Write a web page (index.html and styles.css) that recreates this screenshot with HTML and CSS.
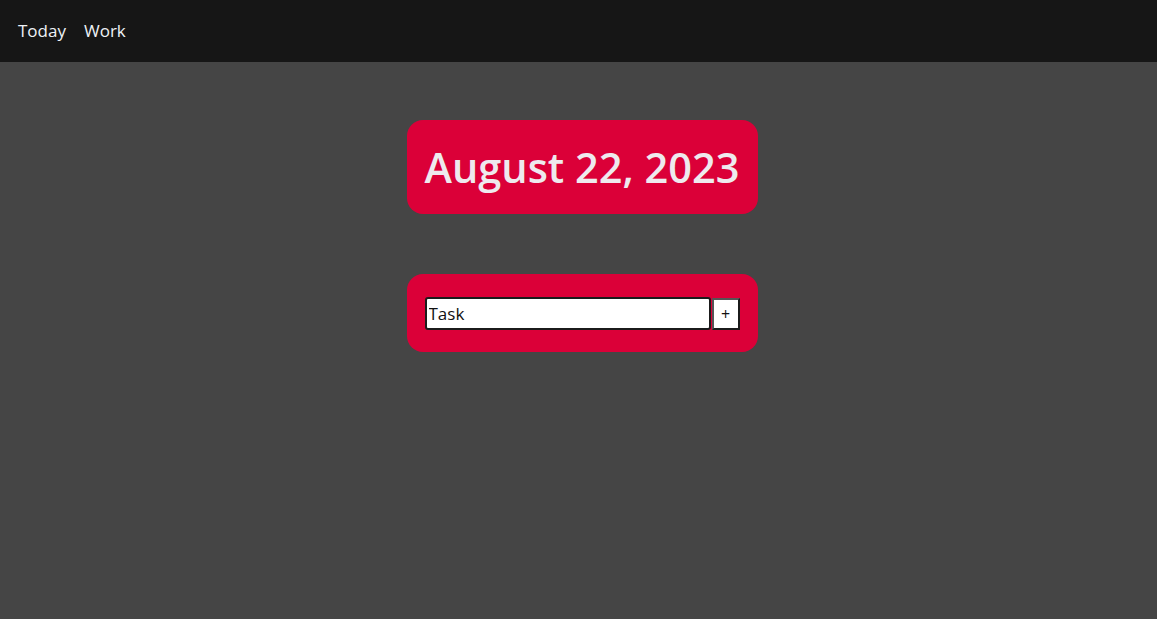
FILE: index.html
```html
<!DOCTYPE html>
<html lang="en">
<head>
<meta charset="utf-8">
<title>Todo</title>
<link rel="stylesheet" href="styles.css">
</head>
<body>
<nav class="topbar">
  <a class="nav-link" href="#">Today</a>
  <a class="nav-link" href="#">Work</a>
</nav>
<main class="content">
  <section class="card date-card">
    <h1 class="date-title">August 22, 2023</h1>
  </section>
  <section class="card task-card">
    <form class="task-form">
      <input class="task-input" type="text" value="Task">
      <button class="task-add" type="button">+</button>
    </form>
  </section>
</main>
</body>
</html>
```
FILE: styles.css
```css
* { box-sizing: border-box; }
html, body { margin: 0; padding: 0; }
body {
  background: #454545;
  font-family: "Open Sans", "Noto Sans", sans-serif;
  min-height: 619px;
}
.topbar {
  height: 62px;
  background: #161616;
  display: flex;
  align-items: center;
  gap: 18px;
  padding-left: 18px;
  padding-bottom: 2px;
}
.nav-link {
  color: #eef2f7;
  text-decoration: none;
  font-size: 17px;
}
.content {
  display: flex;
  flex-direction: column;
  align-items: center;
  gap: 60px;
  padding-top: 58px;
  padding-left: 7px;
}
.card {
  width: 351px;
  background: #db0038;
  border-radius: 16px;
}
.date-card {
  height: 94px;
  display: flex;
  align-items: center;
  justify-content: center;
}
.date-title {
  margin: 0;
  color: #eeeaee;
  font-size: 41.5px;
  font-weight: 600;
  letter-spacing: 0;
}
.task-card {
  padding: 23px 18px 22px;
}
.task-form {
  display: flex;
  gap: 1px;
  margin: 0;
}
.task-input {
  width: 286px;
  height: 33px;
  border: 2px solid #1b1b1b;
  border-radius: 3px;
  background: #fff;
  padding: 0 2px;
  font-family: "Open Sans", "Noto Sans", sans-serif;
  font-size: 17px;
  color: #111;
  outline: none;
}
.task-add {
  width: 28px;
  height: 32px;
  margin-top: 1px;
  border: 2px solid #1b1b1b;
  border-top-color: #555;
  border-left-color: #555;
  background: #fff;
  font-size: 16px;
  padding: 0;
  color: #111;
  font-family: "Open Sans", "Noto Sans", sans-serif;
}
```
